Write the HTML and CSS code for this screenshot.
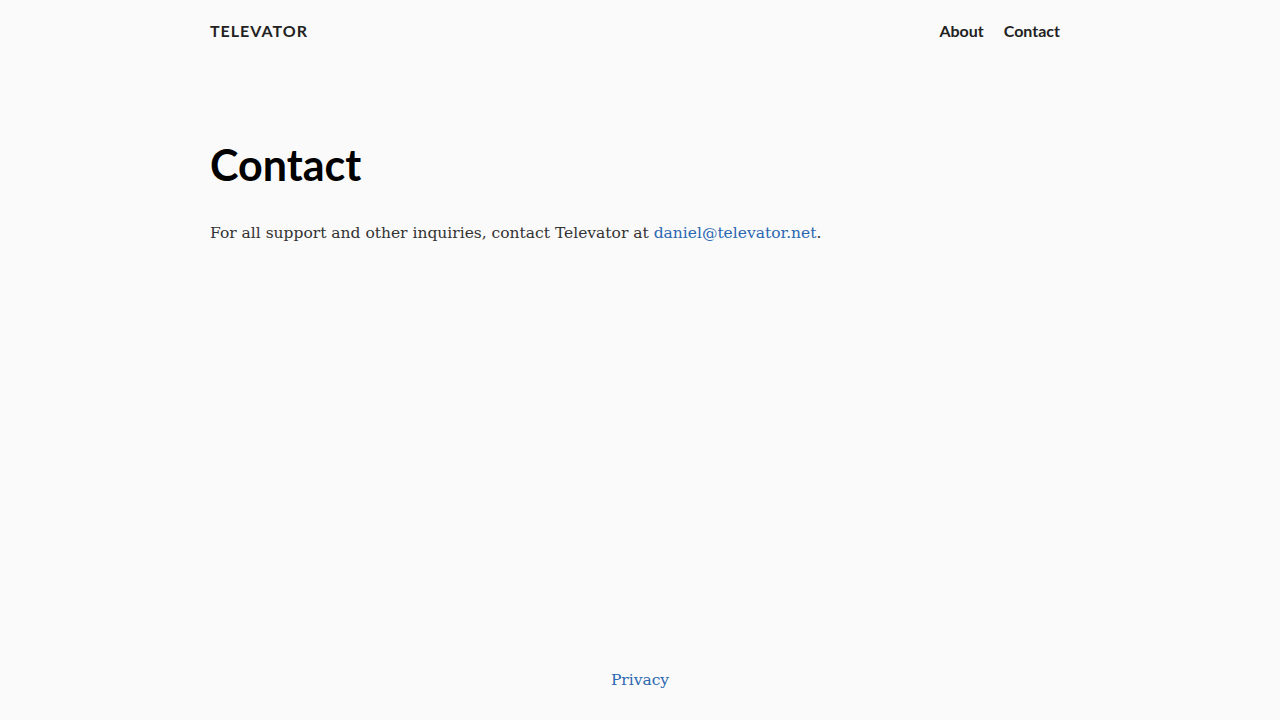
FILE: index.html
```html
<!DOCTYPE html>
<html lang="en">
<head>
<meta charset="utf-8">
<title>Contact - Televator</title>
<link rel="stylesheet" href="styles.css">
</head>
<body>
<header class="site-header">
  <a class="logo" href="#">TELEVATOR</a>
  <nav class="nav">
    <a class="nav-link" href="#">About</a>
    <a class="nav-link" href="#">Contact</a>
  </nav>
</header>
<main class="main">
  <h1 class="title">Contact</h1>
  <p class="body-text">For all support and other inquiries, contact Televator at <a class="link" href="#">daniel@televator.net</a>.</p>
</main>
<div class="spacer"></div>
<footer class="footer">
  <a class="link" href="#">Privacy</a>
</footer>
</body>
</html>
```
FILE: styles.css
```css
html, body {
  margin: 0;
  padding: 0;
  background: #fafafa;
}
body {
  font-family: "DejaVu Serif", serif;
  color: #333;
}
a { text-decoration: none; }
.site-header {
  width: 860px;
  margin: 0 auto;
  padding-top: 20px;
  display: flex;
  justify-content: space-between;
  align-items: flex-start;
}
.logo {
  font-family: Lato, sans-serif;
  font-weight: 700;
  font-size: 16px;
  letter-spacing: 1px;
  color: #222;
  line-height: 21px;
}
.nav {
  display: flex;
  gap: 20px;
  margin-right: 10px;
}
.nav-link {
  font-family: Lato, sans-serif;
  font-weight: 700;
  font-size: 16px;
  color: #222;
  line-height: 21px;
}
.main {
  width: 860px;
  margin: 0 auto;
  padding-top: 105px;
}
.title {
  font-family: Lato, sans-serif;
  font-weight: 700;
  font-size: 43px;
  line-height: 38px;
  margin: 0;
  color: #000;
}
.body-text {
  margin: 37px 0 0;
  font-size: 15.5px;
  line-height: 24px;
  color: #333;
}
.link { color: #2b67b0; }
.spacer {
  margin: 50px 0 0 183px;
  height: 326px;
}
.footer {
  text-align: center;
  padding-top: 45px;
  font-family: "DejaVu Serif", serif;
  font-size: 15.5px;
  line-height: 28px;
}
```
